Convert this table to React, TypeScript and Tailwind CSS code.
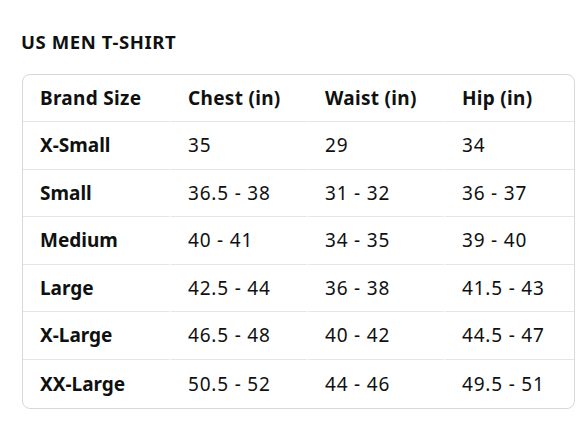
import React from 'react';

const rows = [
  ['X-Small', '35', '29', '34'],
  ['Small', '36.5 - 38', '31 - 32', '36 - 37'],
  ['Medium', '40 - 41', '34 - 35', '39 - 40'],
  ['Large', '42.5 - 44', '36 - 38', '41.5 - 43'],
  ['X-Large', '46.5 - 48', '40 - 42', '44.5 - 47'],
  ['XX-Large', '50.5 - 52', '44 - 46', '49.5 - 51'],
];

const headers = ['Brand Size', 'Chest (in)', 'Waist (in)', 'Hip (in)'];

const App: React.FC = () => {
  return (
    <div className="w-[588px] h-[441px] bg-white text-[#0f1111] px-[22px] pt-[31px]" style={{ fontFamily: '"Noto Sans", "Open Sans", sans-serif' }}>
      <h2 className="text-[18.5px] font-bold leading-[22px] tracking-[0.6px] -ml-px mb-[21px]">US MEN T-SHIRT</h2>

      {/* Tableau des tailles */}
      <div className="w-[553px] border border-[#d5d9d9] rounded-[8px] overflow-hidden">
        <table className="table-fixed border-separate border-spacing-x-px border-spacing-y-0 -mx-px w-[555px]">
          <colgroup>
            <col className="w-[147px]" />
            <col className="w-[136px]" />
            <col className="w-[136px]" />
            <col className="w-[136px]" />
          </colgroup>
          <thead>
            <tr>
              {headers.map((h) => (
                <th key={h} className="h-[47px] text-left font-bold text-[19px] tracking-[0.3px] pl-[17px] border-b border-[#e3e6e6]">
                  {h}
                </th>
              ))}
            </tr>
          </thead>
          <tbody>
            {rows.map((row, i) => (
              <tr key={row[0]}>
                {row.map((cell, j) => (
                  <td
                    key={j}
                    className={`h-[47.6px] text-left text-[19px] pl-[17px] whitespace-nowrap ${j === 0 ? 'font-bold' : 'font-normal tracking-[0.8px]'} ${i < rows.length - 1 ? 'border-b border-[#e3e6e6]' : ''}`}
                  >
                    {cell}
                  </td>
                ))}
              </tr>
            ))}
          </tbody>
        </table>
      </div>
    </div>
  );
};

export default App;
